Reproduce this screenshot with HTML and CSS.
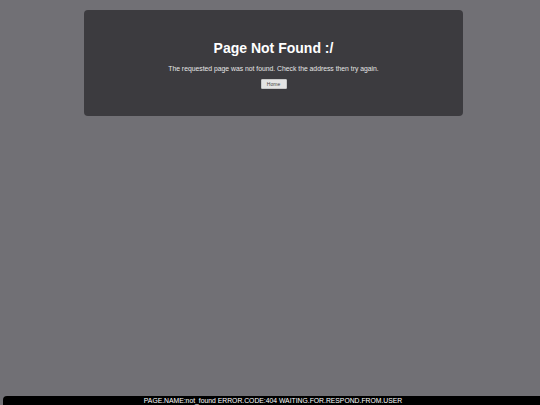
FILE: index.html
```html
<!DOCTYPE html>
<html>
<head>
<meta charset="utf-8">
<link rel="stylesheet" href="styles.css">
</head>
<body>
<div class="page">
  <main class="card">
    <h1 class="title">Page Not Found :/</h1>
    <p class="message">The requested page was not found. Check the address then try again.</p>
    <button class="home">Home</button>
  </main>
  <footer class="status">PAGE.NAME:not_found ERROR.CODE:404 WAITING.FOR.RESPOND.FROM.USER</footer>
</div>
</body>
</html>
```

FILE: styles.css
```css
html, body {
  margin: 0;
  padding: 0;
  height: 100%;
  overflow: hidden;
}
body {
  background: #717075;
  font-family: "Liberation Sans", Arial, sans-serif;
}
.page {
  display: flex;
  flex-direction: column;
  height: 405px;
}
.card {
  box-sizing: border-box;
  width: 379px;
  height: 106px;
  margin: 10px 0 0 84px;
  background: #3c3b3f;
  border-radius: 4px;
  display: flex;
  flex-direction: column;
  align-items: center;
  padding-top: 30px;
}
.title {
  margin: 0;
  font-size: 14px;
  line-height: 17px;
  font-weight: bold;
  color: #ffffff;
}
.message {
  margin: 8px 0 0;
  font-size: 6.8px;
  line-height: 8px;
  color: #e6e6e6;
}
.home {
  margin-top: 6px;
  width: 26px;
  height: 10px;
  padding: 0;
  border: 1px solid #c8c8c8;
  border-radius: 1px;
  background: #e4e4e4;
  color: #444;
  font-family: "Liberation Sans", Arial, sans-serif;
  font-size: 5px;
  line-height: 8px;
}
.status {
  margin-top: auto;
  margin-left: 3px;
  width: 540px;
  height: 9px;
  flex-shrink: 0;
  background: #000;
  border-radius: 4px 4px 0 0;
  color: #fff;
  font-size: 6.8px;
  line-height: 10px;
  text-align: center;
  white-space: nowrap;
}
```
